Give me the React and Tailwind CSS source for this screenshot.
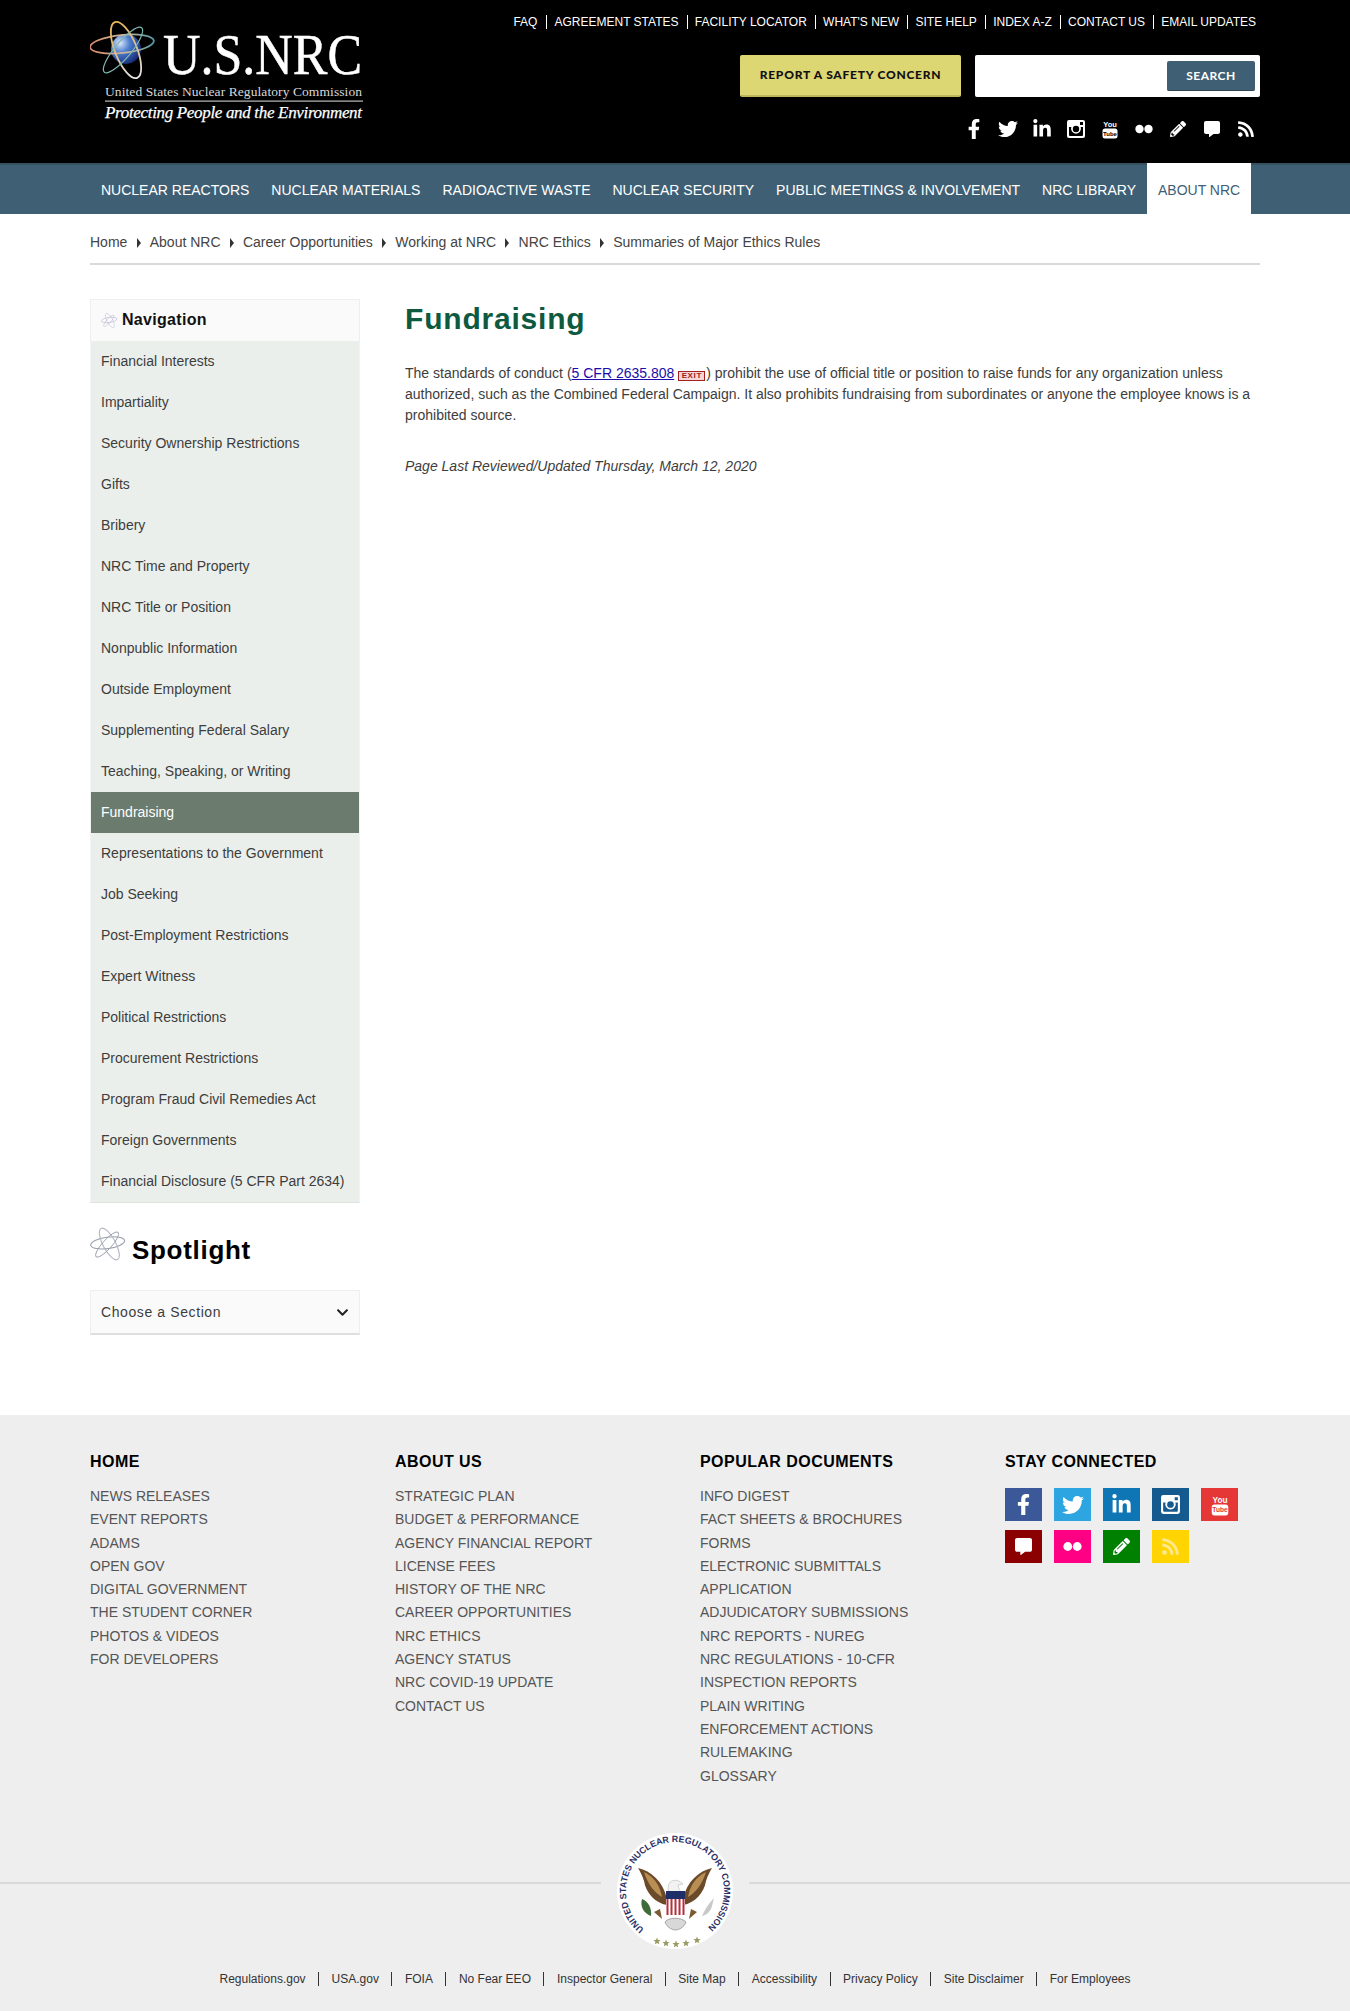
import { FaFacebookF, FaTwitter, FaLinkedinIn, FaPencilAlt, FaCommentAlt, FaRss, FaChevronDown } from 'react-icons/fa'

const topLinks = ['FAQ', 'Agreement States', 'Facility Locator', "What's New", 'Site Help', 'Index A-Z', 'Contact Us', 'Email Updates']
const mainNav = ['Nuclear Reactors', 'Nuclear Materials', 'Radioactive Waste', 'Nuclear Security', 'Public Meetings & Involvement', 'NRC Library']
const crumbs = ['Home', 'About NRC', 'Career Opportunities', 'Working at NRC', 'NRC Ethics', 'Summaries of Major Ethics Rules']
const sideLinks = [
  'Financial Interests', 'Impartiality', 'Security Ownership Restrictions', 'Gifts', 'Bribery', 'NRC Time and Property',
  'NRC Title or Position', 'Nonpublic Information', 'Outside Employment', 'Supplementing Federal Salary',
  'Teaching, Speaking, or Writing', 'Fundraising', 'Representations to the Government', 'Job Seeking',
  'Post-Employment Restrictions', 'Expert Witness', 'Political Restrictions', 'Procurement Restrictions',
  'Program Fraud Civil Remedies Act', 'Foreign Governments', 'Financial Disclosure (5 CFR Part 2634)',
]
const footerCols = [
  { title: 'Home', links: ['News Releases', 'Event Reports', 'ADAMS', 'Open Gov', 'Digital Government', 'The Student Corner', 'Photos & Videos', 'For Developers'] },
  { title: 'About Us', links: ['Strategic Plan', 'Budget & Performance', 'Agency Financial Report', 'License Fees', 'History of the NRC', 'Career Opportunities', 'NRC Ethics', 'Agency Status', 'NRC COVID-19 Update', 'Contact Us'] },
  { title: 'Popular Documents', links: ['Info Digest', 'Fact Sheets & Brochures', 'Forms', 'Electronic Submittals Application', 'Adjudicatory Submissions', 'NRC Reports - NUREG', 'NRC Regulations - 10-CFR', 'Inspection Reports', 'Plain Writing', 'Enforcement Actions', 'Rulemaking', 'Glossary'] },
]
const bottomLinks = ['Regulations.gov', 'USA.gov', 'FOIA', 'No Fear EEO', 'Inspector General', 'Site Map', 'Accessibility', 'Privacy Policy', 'Site Disclaimer', 'For Employees']

function InstagramIcon({ size = 20 }) {
  return (
    <svg width={size} height={size} viewBox="0 0 20 20" fill="currentColor">
      <path
        fillRule="evenodd"
        d="M3 1h14a2 2 0 0 1 2 2v14a2 2 0 0 1-2 2H3a2 2 0 0 1-2-2V3a2 2 0 0 1 2-2Zm0 7v8a1 1 0 0 0 1 1h12a1 1 0 0 0 1-1V8h-2.3a5 5 0 1 1-9.4 0H3Zm7-1.2a3.2 3.2 0 1 0 0 6.400a3.200 3.200 0 0 0 0-6.400ZM14 3v3h3V3h-3Z"
      />
    </svg>
  )
}

function YoutubeIcon({ size = 20, cut = '#000' }) {
  return (
    <svg width={size} height={size} viewBox="0 0 20 20">
      <text x="10" y="8" textAnchor="middle" fontSize="7.500" fontWeight="700" fill="currentColor" fontFamily="Liberation Sans, sans-serif">You</text>
      <rect x="2.500" y="9.500" width="15" height="10" rx="2.500" fill="currentColor" />
      <text x="10" y="16.800" textAnchor="middle" fontSize="6" fontWeight="700" fill={cut} fontFamily="Liberation Sans, sans-serif">Tube</text>
    </svg>
  )
}

function FlickrIcon({ size = 20 }) {
  return (
    <svg width={size} height={size} viewBox="0 0 20 20" fill="currentColor">
      <circle cx="5.500" cy="10" r="4.200" />
      <circle cx="14.500" cy="10" r="4.200" />
    </svg>
  )
}

function Atom({ className, c1 = '#8e8ebd', c2 = '#a9a9c9', sw = 1.4 }) {
  return (
    <svg className={className} viewBox="0 0 65 58" fill="none">
      <ellipse cx="31" cy="27" rx="30" ry="10" transform="rotate(-8 31 27)" stroke={c1} strokeWidth={sw} />
      <ellipse cx="34" cy="29" rx="11" ry="31" transform="rotate(-28 34 29)" stroke={c2} strokeWidth={sw} />
      <ellipse cx="30" cy="30" rx="29" ry="8" transform="rotate(-48 30 30)" stroke={c1} strokeWidth={sw * 0.8} />
    </svg>
  )
}

function Logo() {
  return (
    <svg width="295" height="110" viewBox="0 0 295 110" className="mt-[16px]">
      <defs>
        <radialGradient id="globe" cx="30%" cy="30%" r="80%">
          <stop offset="0%" stopColor="#dfe8f8" />
          <stop offset="40%" stopColor="#4d7fd0" />
          <stop offset="100%" stopColor="#12246e" />
        </radialGradient>
        <linearGradient id="orbitA" x1="0" x2="1" y1="0" y2="0">
          <stop offset="0%" stopColor="#d98a6a" />
          <stop offset="55%" stopColor="#c9b79a" />
          <stop offset="100%" stopColor="#4f9aa8" />
        </linearGradient>
        <linearGradient id="orbitB" x1="0" x2="0" y1="0" y2="1">
          <stop offset="0%" stopColor="#e9b65a" />
          <stop offset="60%" stopColor="#d9c49a" />
          <stop offset="100%" stopColor="#e8e8e8" />
        </linearGradient>
      </defs>
      <circle cx="36" cy="33" r="15" fill="url(#globe)" />
      <ellipse cx="32" cy="28" rx="32" ry="9" transform="rotate(-6 32 28)" stroke="url(#orbitA)" strokeWidth="1.800" fill="none" />
      <ellipse cx="36" cy="34" rx="11" ry="30" transform="rotate(-22 36 34)" stroke="url(#orbitB)" strokeWidth="1.800" fill="none" />
      <ellipse cx="33" cy="34" rx="29" ry="8" transform="rotate(-50 33 34)" stroke="#7fb7b0" strokeWidth="1.200" fill="none" />
      <text x="73" y="57.500" fill="#fff" stroke="#fff" strokeWidth="0.500" fontSize="56" fontFamily="Liberation Serif, serif" textLength="199" lengthAdjust="spacingAndGlyphs">U.S.NRC</text>
      <text x="15" y="79.500" fill="#d8d8d8" fontSize="13.500" fontFamily="Liberation Serif, serif" textLength="257" lengthAdjust="spacing">United States Nuclear Regulatory Commission</text>
      <rect x="15" y="84.500" width="258" height="1.200" fill="#bdbdbd" />
      <text x="15" y="102" fill="#fff" stroke="#fff" strokeWidth="0.250" fontSize="17" fontStyle="italic" fontFamily="Liberation Serif, serif" textLength="257" lengthAdjust="spacing">Protecting People and the Environment</text>
    </svg>
  )
}

function Seal() {
  const stars = [[42, 110], [51, 112], [61, 113], [71, 112], [82, 109]]
  return (
    <svg width="148" height="116" viewBox="-14 2 148 116">
      <circle cx="60" cy="60" r="58" fill="#fff" />
      <defs>
        <path id="sealArc" d="M29 98 A49 49 0 1 1 91 98" />
      </defs>
      <text fontSize="9" fontWeight="700" fill="#2b2f66" fontFamily="Liberation Sans, sans-serif">
        <textPath href="#sealArc" textLength="238" lengthAdjust="spacingAndGlyphs">UNITED STATES NUCLEAR REGULATORY COMMISSION</textPath>
      </text>
      <path d="M23 37 C36 40 48 50 52 68 L52 74 C40 72 31 62 29 50 C27 44 25 40 23 37Z" fill="#6b4a2a" />
      <path d="M97 37 C84 40 72 50 68 68 L68 74 C80 72 89 62 91 50 C93 44 95 40 97 37Z" fill="#6b4a2a" />
      <path d="M29 41 C38 45 45 54 47 66 C40 62 33 54 29 41Z" fill="#b98e55" />
      <path d="M91 41 C82 45 75 54 73 66 C80 62 87 54 91 41Z" fill="#b98e55" />
      <path d="M53 58 C53 50 58 48 64 50 L68 53 L63 54 C64 58 65 60 66 61 L54 61Z" fill="#f2f2f2" stroke="#999" strokeWidth="0.400" />
      <rect x="51" y="60" width="19" height="8" fill="#1d2f66" />
      <path d="M51 68h19v9c0 5-5 8-9.500 9-4.500-1-9.500-4-9.500-9Z" fill="#fff" />
      {[52, 56, 60, 64, 68].map((x) => (
        <rect key={x} x={x - 0.5} y="68" width="2" height="16" fill="#b4303c" />
      ))}
      <path d="M50 91c3-5 17-5 21 0-2 6-8 8-10.500 8S52 97 50 91Z" fill="#d8d8d8" stroke="#666" strokeWidth="0.500" />
      <path d="M47 88 L39 81 L45 78 Z" fill="#7a5a32" />
      <path d="M74 88 L82 81 L76 78 Z" fill="#7a5a32" />
      <path d="M36 85 C28 82 25 75 27 68 C33 70 37 77 36 85Z" fill="#3f6a3a" />
      <path d="M87 85 C90 78 94 72 99 67 L97 75 C96 80 92 84 87 85Z" fill="#c9c9c9" />
      {stars.map(([x, y]) => (
        <path key={x} d={`M${x} ${y - 3.5}l1 2.400 2.600.2-2 1.700.6 2.500-2.200-1.300-2.200 1.300.6-2.500-2-1.700 2.600-.2Z`} fill="#9a9a62" />
      ))}
    </svg>
  )
}

function Header() {
  const socials = [
    <FaFacebookF size={20} />, <FaTwitter size={20} />, <FaLinkedinIn size={20} />, <InstagramIcon />,
    <YoutubeIcon />, <FlickrIcon />, <FaPencilAlt size={16} />, <FaCommentAlt size={16} />, <FaRss size={18} />,
  ]
  return (
    <header className="h-[163px] bg-black">
      <div className="mx-auto flex w-[1170px] justify-between">
        <Logo />
        <div className="flex flex-col items-end">
          <ul className="mt-[15px] flex h-[14px] items-center pr-[4px] text-[12px] uppercase text-white">
            {topLinks.map((link, i) => (
              <li key={link} className={i === 0 ? 'pr-[9px]' : 'border-l border-white pr-[8.3px] pl-[7px] leading-[14px] last:pr-0'}>{link}</li>
            ))}
          </ul>
          <div className="mt-[26px] flex gap-[14px]">
            <a className="flex h-[42px] w-[221px] items-center justify-center rounded-[2px] border-b-2 border-[#bdb85c] bg-[#dcd673] font-['Lato',sans-serif] text-[12px] font-black tracking-[0.75px] text-[#111]">
              REPORT A SAFETY CONCERN
            </a>
            <div className="flex h-[42px] w-[285px] items-center justify-end rounded-[2px] bg-white pr-[5px]">
              <button className="h-[30px] w-[88px] rounded-[2px] border-b border-[#2e4556] bg-[#3f5f75] font-['Lato',sans-serif] text-[12px] font-bold tracking-[0.5px] text-white">
                SEARCH
              </button>
            </div>
          </div>
          <div className="mt-[20px] -mr-[3px] flex h-[24px] items-center text-white">
            {socials.map((icon, i) => (
              <span key={i} className="flex w-[34px] justify-center">{icon}</span>
            ))}
          </div>
        </div>
      </div>
    </header>
  )
}

function MainNav() {
  return (
    <nav className="h-[51px] bg-[#3f5f75] shadow-[inset_0_2px_0_#35505f]">
      <ul className="mx-auto flex h-[51px] w-[1170px] text-[14px] uppercase text-white">
        {mainNav.map((item) => (
          <li key={item} className="flex items-center px-[11px] pt-[3px]">{item}</li>
        ))}
        <li className="flex items-center bg-white px-[11px] pt-[3px] text-[#3f5f75]">About NRC</li>
      </ul>
    </nav>
  )
}

function Breadcrumb() {
  return (
    <div className="mx-auto w-[1170px] border-b-2 border-[#d9d9d9]">
      <ol className="flex h-[49px] items-center pt-[8px] text-[14px] text-[#444]">
        {crumbs.map((crumb, i) => (
          <li key={crumb} className="flex items-center">
            {crumb}
            {i < crumbs.length - 1 && (
              <span className="mx-[9.2px] h-0 w-0 border-y-[5px] border-l-[4px] border-y-transparent border-l-[#333]" />
            )}
          </li>
        ))}
      </ol>
    </div>
  )
}

function Sidebar() {
  return (
    <aside className="w-[270px] shrink-0">
      <div className="border border-[#efefef] border-b-0">
        <div className="flex h-[41px] items-center gap-[4px] bg-[#fafafa] pb-[1px] pl-[10px] text-[16px] font-bold tracking-[0.3px] text-[#111]">
          <Atom className="h-[15px] w-[17px]" />
          Navigation
        </div>
      </div>
      <ul className="border-x border-b border-x-[#f3f3f3] border-b-[#dfe3df] text-[14px] text-[#3d3d3d]">
        {sideLinks.map((link) => (
          <li
            key={link}
            className={
              link === 'Fundraising'
                ? 'flex h-[41px] items-center bg-[#6b7c6e] pl-[10px] text-white'
                : 'flex h-[41px] items-center bg-[#ebefeb] pl-[10px]'
            }
          >
            {link}
          </li>
        ))}
      </ul>
      <div className="mt-[24px] flex items-start">
        <Atom className="h-[34px] w-[37px]" c1="#9a9fad" c2="#b3b7c2" sw={2} />
        <h2 className="mt-[8px] ml-[5px] text-[26px] leading-[30px] font-bold tracking-[0.7px] text-black">Spotlight</h2>
      </div>
      <div className="mt-[25px] flex h-[45px] items-center justify-between border border-b-2 border-[#efefef] border-b-[#dfdfdf] bg-[#fafafa] pr-[10px] pl-[10px] text-[14px] tracking-[0.6px] text-[#3d3d3d]">
        Choose a Section
        <FaChevronDown size={13} className="text-[#222]" />
      </div>
    </aside>
  )
}

function Content() {
  return (
    <main className="ml-[45px] flex-1 text-[14px] leading-[21px] text-[#3d3d3d]">
      <h1 className="mt-[2px] text-[30px] leading-[36px] font-bold tracking-[0.8px] text-[#0d5a40]">Fundraising</h1>
      <p className="mt-[26px]">
        The standards of conduct (<a className="text-[#1a0dab] underline">5 CFR 2635.808</a>
        <span className="mr-[1px] ml-[4px] inline-flex h-[10px] w-[27px] items-center justify-center border border-[#a52020] bg-[#f3d6d6] align-[0px] text-[8px] leading-none font-bold tracking-[0.6px] text-[#a52020]">EXIT</span>
        ) prohibit the use of official title or position to raise funds for any organization unless authorized, such as the Combined Federal Campaign. It also prohibits fundraising from subordinates or anyone the employee knows is a prohibited source.
      </p>
      <p className="mt-[30px] italic">Page Last Reviewed/Updated Thursday, March 12, 2020</p>
    </main>
  )
}

function FooterSocials() {
  const items = [
    ['bg-[#3b5998]', <FaFacebookF size={21} />],
    ['bg-[#2ca5e0]', <FaTwitter size={22} />],
    ['bg-[#0f76b5]', <FaLinkedinIn size={21} />],
    ['bg-[#155a8e]', <InstagramIcon size={21} />],
    ['bg-[#e63737]', <YoutubeIcon size={22} cut="#e63737" />],
    ['bg-[#8b0000]', <FaCommentAlt size={17} />],
    ['bg-[#ff0084]', <FlickrIcon size={21} />],
    ['bg-[#008000]', <FaPencilAlt size={17} />],
    ['bg-[#ffd400]', <FaRss size={19} className="text-[#ffe98a]" />],
  ]
  return (
    <div className="mt-[15px] grid w-[245px] grid-cols-[repeat(5,37px)] gap-x-[12px] gap-y-[9px]">
      {items.map(([bg, icon], i) => (
        <span key={i} className={`flex h-[33px] items-center justify-center text-white ${bg}`}>{icon}</span>
      ))}
    </div>
  )
}

function Footer() {
  return (
    <footer className="flex-1 bg-[#eeeeee]">
      <div className="mx-auto flex w-[1170px] pt-[36px]">
        {footerCols.map((col) => (
          <div key={col.title} className="w-[305px]">
            <h3 className="h-[22px] text-[16px] leading-[22px] font-bold tracking-[0.45px] text-black uppercase">{col.title}</h3>
            <ul className="mt-[12px] w-[250px] text-[14px] leading-[23.3px] text-[#555] uppercase">
              {col.links.map((link) => (
                <li key={link}>{link}</li>
              ))}
            </ul>
          </div>
        ))}
        <div className="flex-1">
          <h3 className="h-[22px] text-[16px] leading-[22px] font-bold tracking-[0.45px] text-black uppercase">Stay Connected</h3>
          <FooterSocials />
        </div>
      </div>
      <div className="mt-[45px] flex items-center">
        <div className="mb-[15px] h-[2px] flex-1 bg-[#d9d9d9]" />
        <Seal />
        <div className="mb-[15px] h-[2px] flex-1 bg-[#d9d9d9]" />
      </div>
      <ul className="mt-[23px] flex justify-center text-[12px] leading-[14px] text-[#333]">
        {bottomLinks.map((link, i) => (
          <li key={link} className={i === bottomLinks.length - 1 ? 'pl-[12.500px]' : i === 0 ? 'border-r border-[#333] pr-[12.500px]' : 'border-r border-[#333] px-[12.500px]'}>
            {link}
          </li>
        ))}
      </ul>
    </footer>
  )
}

export default function App() {
  return (
    <div className="flex min-h-[2011px] flex-col bg-white font-['Liberation_Sans',Arial,sans-serif]">
      <Header />
      <MainNav />
      <Breadcrumb />
      <div className="mx-auto flex w-[1170px] pt-[34px] pb-[80px]">
        <Sidebar />
        <Content />
      </div>
      <Footer />
    </div>
  )
}
